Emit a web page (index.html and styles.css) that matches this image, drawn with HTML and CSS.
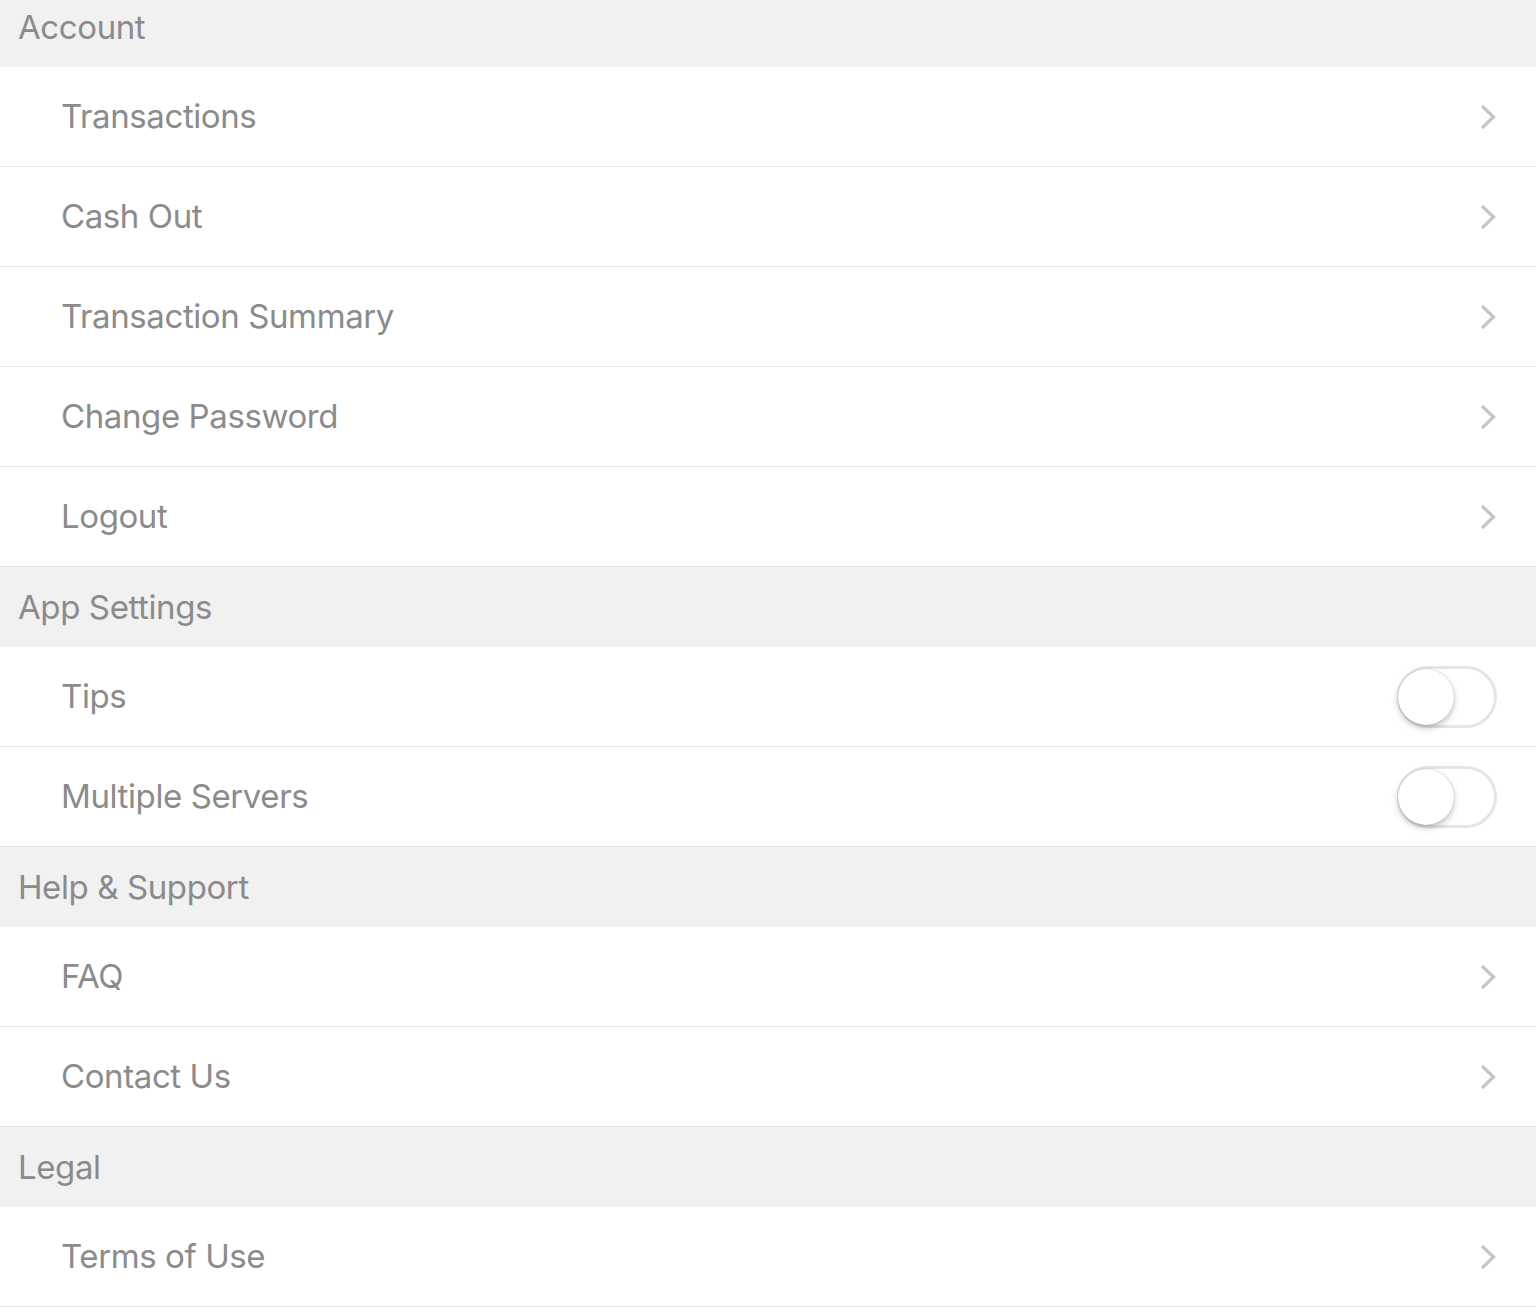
FILE: index.html
```html
<!DOCTYPE html>
<html>
<head>
<meta charset="utf-8">
<link rel="stylesheet" href="styles.css">
</head>
<body>
<div class="list">
  <div class="section-header">Account</div>
  <div class="row"><span class="label">Transactions</span><svg class="chevron" viewBox="0 0 16 26"><path d="M2 2 L13.5 13 L2 24" /></svg></div>
  <div class="row"><span class="label">Cash Out</span><svg class="chevron" viewBox="0 0 16 26"><path d="M2 2 L13.5 13 L2 24" /></svg></div>
  <div class="row"><span class="label">Transaction Summary</span><svg class="chevron" viewBox="0 0 16 26"><path d="M2 2 L13.5 13 L2 24" /></svg></div>
  <div class="row"><span class="label">Change Password</span><svg class="chevron" viewBox="0 0 16 26"><path d="M2 2 L13.5 13 L2 24" /></svg></div>
  <div class="row"><span class="label">Logout</span><svg class="chevron" viewBox="0 0 16 26"><path d="M2 2 L13.5 13 L2 24" /></svg></div>

  <div class="section-header">App Settings</div>
  <div class="row"><span class="label">Tips</span><span class="toggle"><span class="knob"></span></span></div>
  <div class="row"><span class="label">Multiple Servers</span><span class="toggle"><span class="knob"></span></span></div>

  <div class="section-header">Help &amp; Support</div>
  <div class="row"><span class="label">FAQ</span><svg class="chevron" viewBox="0 0 16 26"><path d="M2 2 L13.5 13 L2 24" /></svg></div>
  <div class="row"><span class="label">Contact Us</span><svg class="chevron" viewBox="0 0 16 26"><path d="M2 2 L13.5 13 L2 24" /></svg></div>

  <div class="section-header">Legal</div>
  <div class="row"><span class="label">Terms of Use</span><svg class="chevron" viewBox="0 0 16 26"><path d="M2 2 L13.5 13 L2 24" /></svg></div>
</div>
</body>
</html>
```
FILE: styles.css
```css
html, body {
  margin: 0;
  padding: 0;
  background: #ffffff;
}
body {
  font-family: "Inter", "Roboto", "Liberation Sans", sans-serif;
  color: #8b8b8b;
  overflow: hidden;
}
.list {
  margin-top: -13px;
  display: flex;
  flex-direction: column;
}
.section-header {
  height: 80px;
  background: #f1f1f1;
  display: flex;
  align-items: center;
  padding-left: 18px;
  font-size: 33px;
  letter-spacing: -0.4px;
  box-sizing: border-box;
}
.row {
  height: 100px;
  box-sizing: border-box;
  border-bottom: 1px solid #e6e6e6;
  display: flex;
  align-items: center;
  justify-content: space-between;
  padding-left: 61px;
  padding-right: 40px;
  font-size: 33px;
  letter-spacing: -0.4px;
}
.label {
  line-height: 1;
}
.chevron {
  width: 16px;
  height: 26px;
}
.chevron path {
  fill: none;
  stroke: #c4c4c9;
  stroke-width: 3.2;
  stroke-linecap: butt;
  stroke-linejoin: miter;
}
.toggle {
  position: relative;
  width: 100px;
  height: 62px;
  box-sizing: border-box;
  border: 3px solid #e5e5e5;
  border-radius: 31px;
  background: #ffffff;
  margin-right: -1px;
}
.knob {
  position: absolute;
  left: -2px;
  top: 0;
  width: 56px;
  height: 56px;
  border-radius: 50%;
  background: #ffffff;
  box-shadow: 0 3px 6px rgba(0, 0, 0, 0.25), 0 0 1px rgba(0, 0, 0, 0.3);
}
```
